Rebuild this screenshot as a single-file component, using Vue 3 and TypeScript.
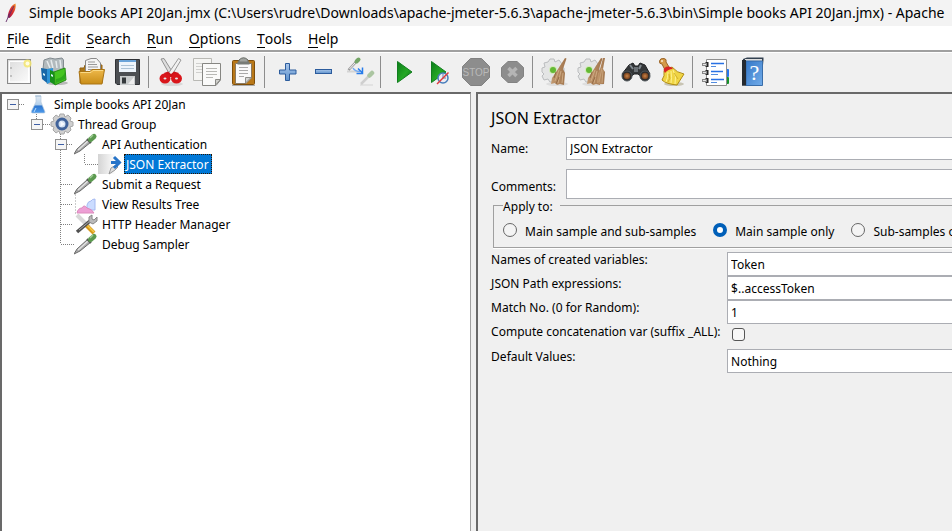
<script setup lang="ts">
import { ref } from 'vue'

type Guide = 'none' | 'line' | 'tee' | 'elbow' | 'root' | 'last' | 'open'
interface TreeNode {
  label: string
  icon: string
  guides: Guide[]
}

const menus = ['File', 'Edit', 'Search', 'Run', 'Options', 'Tools', 'Help']

const toolGroups: { id: string; label: string }[][] = [
  [
    { id: 'new', label: 'New' },
    { id: 'templates', label: 'Templates' },
    { id: 'open', label: 'Open' },
    { id: 'save', label: 'Save' },
  ],
  [
    { id: 'cut', label: 'Cut' },
    { id: 'copy', label: 'Copy' },
    { id: 'paste', label: 'Paste' },
  ],
  [
    { id: 'expand', label: 'Expand all' },
    { id: 'collapse', label: 'Collapse all' },
    { id: 'toggle', label: 'Toggle' },
  ],
  [
    { id: 'start', label: 'Start' },
    { id: 'startnow', label: 'Start no pauses' },
    { id: 'stop', label: 'Stop' },
    { id: 'shutdown', label: 'Shutdown' },
  ],
  [
    { id: 'clear', label: 'Clear' },
    { id: 'clearall', label: 'Clear all' },
  ],
  [
    { id: 'search', label: 'Search' },
    { id: 'reset', label: 'Reset search' },
  ],
  [
    { id: 'functions', label: 'Function helper' },
    { id: 'help', label: 'Help' },
  ],
]

const nodes: TreeNode[] = [
  { label: 'Simple books API 20Jan', icon: 'flask', guides: ['root'] },
  { label: 'Thread Group', icon: 'gear', guides: ['none', 'last'] },
  { label: 'API Authentication', icon: 'sampler', guides: ['none', 'none', 'open'] },
  { label: 'JSON Extractor', icon: 'extractor', guides: ['none', 'none', 'line', 'elbow'] },
  { label: 'Submit a Request', icon: 'sampler', guides: ['none', 'none', 'tee'] },
  { label: 'View Results Tree', icon: 'results', guides: ['none', 'none', 'tee'] },
  { label: 'HTTP Header Manager', icon: 'config', guides: ['none', 'none', 'tee'] },
  { label: 'Debug Sampler', icon: 'sampler', guides: ['none', 'none', 'elbow'] },
]
const isToggle = (g: Guide) => g === 'root' || g === 'last' || g === 'open'
const guidePaths: Record<Guide, string> = {
  none: '',
  line: 'M10.5 0V20',
  tee: 'M10.5 0V20M11 10.5H22',
  elbow: 'M10.5 0V10M11 10.5H24',
  root: 'M17 10.5H23',
  last: 'M10.5 0V5M17 10.5H24',
  open: 'M10.5 0V5M10.5 16V20M17 10.5H23',
}

const selected = ref('JSON Extractor')
const name = ref('JSON Extractor')
const comments = ref('')
const scope = ref('main')
const scopes = [
  { value: 'all', label: 'Main sample and sub-samples' },
  { value: 'main', label: 'Main sample only' },
  { value: 'sub', label: 'Sub-samples only' },
]
const variables = ref('Token')
const expressions = ref('$..accessToken')
const matchNo = ref('1')
const concatenate = ref(false)
const defaults = ref('Nothing')
</script>

<template>
  <div class="window">
    <svg class="defs" width="0" height="0" aria-hidden="true">
      <defs>
        <linearGradient id="gPaper" x1="0" y1="0" x2="1" y2="1"><stop offset="0" stop-color="#dcdcdc" /><stop offset="1" stop-color="#fdfdfd" /></linearGradient>
        <linearGradient id="gFolder" x1="0" y1="0" x2="0" y2="1"><stop offset="0" stop-color="#eeb94b" /><stop offset="1" stop-color="#c98d17" /></linearGradient>
        <linearGradient id="gGreen" x1="0" y1="0" x2="1" y2="1"><stop offset="0" stop-color="#0b7d1a" /><stop offset=".55" stop-color="#25a825" /><stop offset="1" stop-color="#0a6414" /></linearGradient>
        <linearGradient id="gBlue" x1="0" y1="0" x2="0" y2="1"><stop offset="0" stop-color="#a9c6ea" /><stop offset="1" stop-color="#5f93cd" /></linearGradient>
        <linearGradient id="gBook" x1="0" y1="0" x2="1" y2="1"><stop offset="0" stop-color="#3578c8" /><stop offset="1" stop-color="#72ace9" /></linearGradient>
        <linearGradient id="gFeather" x1="1" y1="0" x2="0" y2="1"><stop offset="0" stop-color="#f39a26" /><stop offset=".35" stop-color="#e0402b" /><stop offset=".7" stop-color="#c2203c" /><stop offset="1" stop-color="#5d2569" /></linearGradient>
        <linearGradient id="gBroom" x1="0" y1="0" x2="1" y2="0"><stop offset="0" stop-color="#c39a70" /><stop offset="1" stop-color="#a0744c" /></linearGradient>
        <linearGradient id="gFade" x1="0" y1="0" x2="1" y2="0"><stop offset="0" stop-color="#d4d4d4" /><stop offset="1" stop-color="#ffffff" /></linearGradient>
        <linearGradient id="gFlask" x1="0" y1="0" x2="0" y2="1"><stop offset="0" stop-color="#e3ebf3" /><stop offset=".5" stop-color="#b4d0eb" /><stop offset=".6" stop-color="#2f78d0" /><stop offset="1" stop-color="#4d9aec" /></linearGradient>
        <radialGradient id="gLens"><stop offset="0" stop-color="#c98448" /><stop offset="1" stop-color="#75401c" /></radialGradient>
      </defs>
    </svg>

    <header class="titlebar">
      <svg class="feather" width="12" height="20" viewBox="0 0 12 20" aria-hidden="true">
        <path d="M10.5 0.5C6.500 2 3.500 7 2.500 14.500L4.500 15C9 11 11.500 5 10.500 .5Z" fill="url(#gFeather)" />
        <path d="M9 3L3 14.500L1 19" fill="none" stroke="#632a68" stroke-width=".9" />
      </svg>
      <span class="caption">Simple books API 20Jan.jmx (C:\Users\rudre\Downloads\apache-jmeter-5.6.3\apache-jmeter-5.6.3\bin\Simple books API 20Jan.jmx) - Apache</span>
    </header>

    <nav class="menubar">
      <button v-for="m in menus" :key="m" type="button" class="menu"><span class="key">{{ m[0] }}</span>{{ m.slice(1) }}</button>
    </nav>

    <div class="toolbar" role="toolbar">
      <div v-for="(group, gi) in toolGroups" :key="gi" class="group">
        <button v-for="t in group" :key="t.id" type="button" class="tool" :aria-label="t.label">
          <svg width="32" height="32" viewBox="0 0 32 32" aria-hidden="true">
            <g v-if="t.id === 'new'">
              <rect x="5.500" y="3.500" width="23" height="24" fill="url(#gPaper)" stroke="#8a8a8a" />
              <path d="M7.500 26V5.500H26.500V26Z" fill="none" stroke="#fff" />
              <circle cx="9" cy="12" r=".8" fill="#888" /><circle cx="9" cy="20" r=".8" fill="#888" />
              <circle cx="25.500" cy="7.500" r="4" fill="#f5e66d" opacity=".85" /><circle cx="25.500" cy="7.500" r="2" fill="#fffde2" />
            </g>
            <g v-else-if="t.id === 'templates'">
              <ellipse cx="19" cy="27" rx="11" ry="2" fill="#b9b9b9" />
              <path d="M5 13L6 4L12 2L17 3L24 2L25.500 4V16L8 17Z" fill="#b2babd" stroke="#828b90" />
              <path d="M9 5L12 12M13 4L15 12M18 5L19 12M22 4L23 12" stroke="#e5eaec" stroke-width="1.500" />
              <path d="M3 12L9 13V27L4 23Z" fill="#1767a8" /><path d="M9 13L15 12V25L9 28Z" fill="#2e94d7" />
              <path d="M12 14L17 16V29L12 26Z" fill="#16901b" />
              <path d="M16 16L27 12L28 24L17 29Z" fill="#45c520" stroke="#278c18" />
              <path d="M18 27L27 23V16Q25 22 18 23Z" fill="#2eaa1b" /><path d="M5 17L7 18V20L5 19ZM13 18L15 19V21L13 20Z" fill="#d6f2f6" />
            </g>
            <g v-else-if="t.id === 'open'">
              <path d="M6 12H10L11 9H28V27H6Z" fill="#ad7819" stroke="#946313" />
              <path d="M11.500 15V4.500L17 2.500H22.500L26.500 7V18H11.500Z" fill="#f4f4f4" stroke="#8a8a8a" />
              <path d="M14 6H21M14 8.500H23M14 11H24M14 13.500H24" stroke="#999" />
              <path d="M5 15.500H16L18 13.500H30.500L28 28H7Z" fill="url(#gFolder)" stroke="#aa7414" />
              <path d="M6.500 16.500H17L19 14.500H29" fill="none" stroke="#f9d986" />
            </g>
            <g v-else-if="t.id === 'save'">
              <path d="M5.500 3.500H29.500V28.500H7L5.500 27Z" fill="#4c4f53" stroke="#303236" />
              <rect x="9" y="4" width="17" height="12" fill="#edf4fb" /><path d="M9 4H26V6H9Z" fill="#6ba4d9" />
              <path d="M11 9.500H24M11 12.500H24" stroke="#acc2d5" />
              <rect x="10" y="20" width="15" height="9" fill="#c9cccd" /><rect x="12" y="21.500" width="4" height="6" fill="#34383b" /><path d="M18 28L24 21V28Z" fill="#eee" />
            </g>
            <g v-else-if="t.id === 'cut'">
              <ellipse cx="18" cy="28" rx="11" ry="2" fill="#d8d8d8" />
              <path d="M7 3L10 2.500L19 17L16 19Z" fill="#dedede" stroke="#929292" /><path d="M24.500 2.500L27 4L18 19L14 18Z" fill="#f2f2f2" stroke="#999" />
              <path d="M10 17L14 15.500L17 18L20 15.500L25 17L22 21H12Z" fill="#cd151a" />
              <ellipse cx="11" cy="22.500" rx="3.500" ry="3" fill="#e9e9e9" stroke="#d9161b" stroke-width="4" /><ellipse cx="22.500" cy="22.500" rx="3.500" ry="3" fill="#e9e9e9" stroke="#d9161b" stroke-width="4" />
            </g>
            <g v-else-if="t.id === 'copy'">
              <path d="M3.500 2.500H21.500V24.500H3.500Z" fill="#f5f5f3" stroke="#b9b9b5" /><path d="M6 7.500H18M6 10.500H14M6 13.500H14M6 16.500H14" stroke="#d0d0ce" />
              <path d="M12.500 7.500H30.500V24L26 29.500H12.500Z" fill="#fafaf9" stroke="#868682" /><path d="M16 12.500H27M16 15.500H27M16 18.500H27M16 21.500H23" stroke="#b8b8b4" /><path d="M25.500 29V23.500H30.500Z" fill="#cfcfcb" stroke="#8a8a86" />
            </g>
            <g v-else-if="t.id === 'paste'">
              <rect x="6.500" y="4.500" width="22" height="24" rx="1" fill="#b97818" stroke="#7e4e0a" />
              <path d="M9.500 7.500H25.500V22L20 27.500H9.500Z" fill="#fafafa" stroke="#8b7a61" />
              <path d="M13 6.500V4Q17.500-.5 22 4V6.500Z" fill="#a0a39f" stroke="#666a65" /><rect x="11.500" y="5.500" width="12" height="3" fill="#777b76" />
              <path d="M13 11.500H22M13 14.500H22M13 17.500H22M13 20.500H18" stroke="#aaa" /><path d="M19.500 27V21.500H25Z" fill="#d5d5d3" stroke="#8e8e8a" />
              <path d="M6 29.500H29" stroke="#aaa" />
            </g>
            <path v-else-if="t.id === 'expand'" d="M15.500 7.500H19.500V14H26V18H19.500V24.500H15.500V18H9.500V14H15.500Z" fill="url(#gBlue)" stroke="#2c5c9d" />
            <rect v-else-if="t.id === 'collapse'" x="9.500" y="13.500" width="16" height="4" fill="url(#gBlue)" stroke="#2c5c9d" />
            <g v-else-if="t.id === 'toggle'">
              <path d="M5 15.500H18" stroke="#d4d4d4" stroke-width="2" /><path d="M18 29H31" stroke="#e2e2e2" stroke-width="2" />
              <path d="M6.500 14L14 6" stroke="#9a9a9a" stroke-width="2.500" /><path d="M7.500 13L14 6" stroke="#f6f6f6" /><path d="M14.500 5.500L16.500 3.500" stroke="#74a566" stroke-width="4" stroke-linecap="round" />
              <path d="M11 12Q13 15.500 18 15.500" fill="none" stroke="#73aaf3" stroke-width="1.500" /><path d="M16 12.500L20 16.500M20.500 11.500V17.500H14.500" fill="none" stroke="#277ceb" stroke-width="1.500" />
              <g opacity=".55"><path d="M19 28L27 20" stroke="#b5b5b5" stroke-width="2.500" /><path d="M27.500 19.500L30 17" stroke="#73a362" stroke-width="4.500" stroke-linecap="round" /></g>
            </g>
            <path v-else-if="t.id === 'start'" d="M11.500 5.500L26 16L11.500 26.500Z" fill="url(#gGreen)" stroke="#127e20" />
            <g v-else-if="t.id === 'startnow'">
              <path d="M9.500 5.500L24 16L9.500 26.500Z" fill="url(#gGreen)" stroke="#127e20" />
              <circle cx="21" cy="22" r="5" fill="#ececf2" stroke="#487dbb" stroke-width="1.500" /><path d="M21 22V18M21 22H24" stroke="#5c83b2" /><path d="M15 28L26.500 16.500" stroke="#e13a3d" stroke-width="1.500" />
            </g>
            <g v-else-if="t.id === 'stop'">
              <path d="M12.500 2.500H23.500L31.500 10.500V21.500L23.500 29.500H12.500L4.500 21.500V10.500Z" fill="#8d8d8d" stroke="#818181" />
              <text x="18" y="20" text-anchor="middle" class="stop-text">STOP</text>
            </g>
            <g v-else-if="t.id === 'shutdown'">
              <path d="M14 5.500H23L29.500 11.500V20.500L23 26.500H14L7.500 20.500V11.500Z" fill="#8d8d8d" stroke="#838383" />
              <path d="M14.500 12L22.500 20M22.500 12L14.500 20" stroke="#b5b5b5" stroke-width="3.500" />
            </g>
            <g v-else-if="t.id === 'clear' || t.id === 'clearall'">
              <ellipse cx="19" cy="28" rx="11" ry="2" fill="#dedede" />
              <path d="M12 3H16L17 6L21 4L24 8L22 11L26 12V17L22 19L23 22L19 25L16 23L15 26H12L10 23L6 24L4 20L6 18L4 16V12L7 11L6 7L10 6Z" fill="#e4e5e5" stroke="#bbbdbf" />
              <circle cx="15" cy="14" r="4" fill="#d2eab9" /><circle cx="15" cy="14" r="3" fill="#63b933" />
              <path d="M28.500 2.500L25 13L27 17L26 29L22 28L19 29L17 27L13 28L14 22L20 13L27 2Z" fill="url(#gBroom)" />
              <path d="M21 14L17 25M23 15L20 27M25 17L24 27" stroke="#cfab83" /><path d="M18 16L16 22M21 21L18 28" stroke="#946b46" />
              <g v-if="t.id === 'clearall'"><path d="M31 2L29 13L31 16L30 28L25 28L23 26L24 18L26 13L29 2Z" fill="url(#gBroom)" /><path d="M28 12L25 26M29 14L28 27" stroke="#c9a37a" /></g>
            </g>
            <g v-else-if="t.id === 'search'">
              <path d="M11 9L15 7L17 10H20L22 7L27 9L32 18L27 24L20 18H16L9 24L4 18Z" fill="#333638" stroke="#202224" />
              <path d="M12 9L15 13M23 9L21 13" stroke="#81898f" stroke-width="2" /><rect x="16" y="11" width="4" height="5" fill="#6b7176" />
              <circle cx="9" cy="20" r="5" fill="#292b2c" stroke="#4f565a" /><circle cx="9" cy="20" r="3.300" fill="url(#gLens)" /><circle cx="27" cy="20" r="5" fill="#292b2c" stroke="#4f565a" /><circle cx="27" cy="20" r="3.300" fill="url(#gLens)" />
            </g>
            <g v-else-if="t.id === 'reset'">
              <ellipse cx="20" cy="28" rx="10" ry="2" fill="#c8c4b3" />
              <path d="M5.500 5Q6 2 10 2.500Q13 3 12 6L15 11L11 14L8 8Q5 8 5.500 5Z" fill="#d49a49" stroke="#9b6427" /><circle cx="8" cy="5" r="1" fill="#f8ead2" />
              <path d="M10 15L18 11Q23 17 30 18L23 29Q12 28 8 24Q11 20 10 15Z" fill="#f0d544" stroke="#b18c12" />
              <path d="M14 16Q14 22 12 26M17 15Q18 22 17 27M19 14Q23 20 21 28" fill="none" stroke="#fff391" /><path d="M15 18Q17 23 14 26M20 17L24 23" fill="none" stroke="#d3b02d" />
              <path d="M9.500 14Q11 9 17 11L19 13Q14 13 11 17Z" fill="#d72524" />
            </g>
            <g v-else-if="t.id === 'functions'">
              <rect x="26" y="13" width="5" height="8" rx="1" fill="#2676ee" /><rect x="26" y="21" width="5" height="7" rx="1" fill="#17922b" />
              <path d="M8.500 3.500H28.500V29.500H8.500Z" fill="#fff" stroke="#8e8e8e" />
              <path d="M9 6V11M9 14V19M9 22V27" stroke="#272727" stroke-width="3" />
              <g fill="#e6e6e6" stroke="#888"><rect x="4.500" y="7.500" width="4" height="2" /><rect x="4.500" y="15.500" width="4" height="2" /><rect x="4.500" y="23.500" width="4" height="2" /></g>
              <path d="M13 7.500H26M13 15.500H25M13 23.500H26" stroke="#2871e4" stroke-width="1.500" /><path d="M13 10.500H18M13 18.500H20M13 26.500H19" stroke="#528ce0" />
            </g>
            <g v-else-if="t.id === 'help'">
              <path d="M9 3L13 1.500H29.500V4L27 29.500H8Z" fill="#334150" /><path d="M11 3H28V5H11Z" fill="#dedede" />
              <path d="M12 5H28.500V29.500H12Z" fill="url(#gBook)" stroke="#396da9" /><path d="M8 4H12V29.500H8Z" fill="#252a30" />
              <text x="20.500" y="24" text-anchor="middle" class="help-text">?</text>
            </g>
          </svg>
        </button>
      </div>
    </div>

    <main class="split">
      <section class="tree-pane">
        <ul class="tree" role="tree">
          <li v-for="n in nodes" :key="n.label" class="node" role="treeitem" :aria-selected="selected === n.label">
            <template v-for="(g, i) in n.guides" :key="i">
              <button v-if="isToggle(g)" type="button" class="guide" aria-label="Collapse">
                <svg width="24" height="20" viewBox="0 0 24 20" aria-hidden="true">
                  <path :d="guidePaths[g]" class="dots" />
                  <rect x="5.500" y="5.500" width="11" height="10" fill="#f5f5f5" stroke="#919191" /><path d="M8 10.500H14" stroke="#3e5fa5" />
                </svg>
              </button>
              <svg v-else class="guide" width="24" height="20" viewBox="0 0 24 20" aria-hidden="true"><path :d="guidePaths[g]" class="dots" /></svg>
            </template>
            <svg class="node-icon" width="24" height="24" viewBox="0 0 24 24" aria-hidden="true">
              <g v-if="n.icon === 'flask'"><path d="M10 4H15V10L19 20Q19 21 18 21H6Q5 21 5.500 19L10 10Z" fill="url(#gFlask)" stroke="#b6c9dc" stroke-width=".7" /><path d="M9 4H15" stroke="#9fbbd4" /><path d="M10 16L8 20" stroke="#b9defd" /></g>
              <g v-else-if="n.icon === 'gear'">
                <path d="M10 2H14L15 5L18 3L21 6L20 9L23 10V14L20 15L21 18L18 21L15 19L14 22H10L9 19L6 21L3 18L4 15L1 14V10L4 9L3 6L6 3L9 5Z" fill="#cfcfcf" stroke="#a8a8a8" />
                <circle cx="12" cy="12" r="5" fill="#d1e0f2" stroke="#41639a" stroke-width="3" /><path d="M10.500 9L15 12L10.500 15Z" fill="#f7faff" />
              </g>
              <g v-else-if="n.icon === 'sampler'">
                <path d="M0 22L3 17L14 7L17 10L6 19Z" fill="#aaa" stroke="#6b6b6b" /><path d="M4 18L14 9" stroke="#e2e2e2" stroke-width="1.500" />
                <path d="M13 7L17 11" stroke="#555" stroke-width="2" /><path d="M16.500 7.500L20 4.500" stroke="#5c9a50" stroke-width="5" stroke-linecap="round" /><path d="M16 6L19 3" stroke="#9ecb93" stroke-width="1.500" />
              </g>
              <g v-else-if="n.icon === 'extractor'"><path d="M0 2H18V22H0Z" fill="url(#gFade)" /><path d="M11 22L13 16L18 13L20 15L17 18Z" fill="#ddd" stroke="#989898" /><path d="M13 10.500H21M16 5L21.500 10.500L16 16" fill="none" stroke="#2774c8" stroke-width="3" /></g>
              <g v-else-if="n.icon === 'results'"><path d="M1.500 2V22" fill="none" stroke="#ccc" stroke-dasharray="2 1" /><path d="M13 18V13Q14 9 17 9Q18 7 21 7V18Z" fill="#cbdcff" stroke="#a5baf1" /><path d="M3 21Q4 16 8 16Q10 12 13 16Q18 17 20 21Z" fill="#ed9fd5" stroke="#dc8abc" /></g>
              <g v-else><path d="M3 3L15 15" stroke="#d8d8d8" stroke-width="4" /><path d="M12 13L20 21" stroke="#d79a1c" stroke-width="4" /><path d="M13 13L20 20" stroke="#f5ca4a" stroke-width="1.500" /><path d="M3 20L16 9" stroke="#505050" stroke-width="3.500" /><path d="M5 18L16 9" stroke="#aaa" /><path d="M15 10V5L18 3V7L20 8L23 5V9L19 12Z" fill="#bababa" stroke="#888" /></g>
            </svg>
            <button type="button" class="node-label" :class="{ selected: selected === n.label }" @click="selected = n.label">{{ n.label }}</button>
          </li>
        </ul>
      </section>

      <form class="editor" @submit.prevent>
        <h1>JSON Extractor</h1>
        <div class="head-row">
          <label for="f-name">Name:</label>
          <input id="f-name" v-model="name" type="text" class="field" />
        </div>
        <div class="head-row comments">
          <label for="f-comments">Comments:</label>
          <input id="f-comments" v-model="comments" type="text" class="field" />
        </div>
        <fieldset>
          <legend>Apply to:</legend>
          <div class="radios">
            <label v-for="s in scopes" :key="s.value"><input v-model="scope" type="radio" name="scope" :value="s.value" />{{ s.label }}</label>
          </div>
        </fieldset>
        <div class="grid">
          <label for="f-vars">Names of created variables:</label>
          <input id="f-vars" v-model="variables" type="text" class="field" />
          <label for="f-expr">JSON Path expressions:</label>
          <input id="f-expr" v-model="expressions" type="text" class="field" />
          <label for="f-match">Match No. (0 for Random):</label>
          <input id="f-match" v-model="matchNo" type="text" class="field" />
          <label for="f-concat">Compute concatenation var (suffix _ALL):</label>
          <span class="check"><input id="f-concat" v-model="concatenate" type="checkbox" /></span>
          <label for="f-def">Default Values:</label>
          <input id="f-def" v-model="defaults" type="text" class="field" />
        </div>
      </form>
    </main>
  </div>
</template>

<style>
body {
  background: #f0f0f0;
  overflow: hidden;
}
</style>

<style scoped>
.window {
  display: flex;
  flex-direction: column;
  height: 100vh;
  overflow: hidden;
  background: #f0f0f0;
  color: #000;
  font-family: 'Noto Sans', sans-serif;
  font-size: 12px;
  line-height: 16px;
}
.window * {
  box-sizing: border-box;
}
.defs {
  position: absolute;
}
button {
  padding: 0;
  border: 0;
  background: none;
  color: inherit;
  font: inherit;
}
.titlebar {
  display: flex;
  flex: none;
  align-items: center;
  gap: 12px;
  height: 26px;
  padding-left: 5px;
  background: #f3f3f3;
  font-size: 14px;
  line-height: 26px;
  white-space: nowrap;
}
.feather {
  flex: none;
}
.menubar {
  display: flex;
  flex: none;
  gap: 16px;
  height: 24px;
  padding-left: 7px;
  background: #fff;
  font-size: 14px;
  line-height: 26px;
}
.key {
  display: inline-block;
  border-bottom: 1px solid #000;
  line-height: 16px;
}
.toolbar {
  display: flex;
  flex: none;
  height: 42px;
  border-top: 2px solid #a0a0a0;
  box-shadow: inset 0 1px #fff;
}
.group {
  display: flex;
  align-items: center;
}
.group + .group::before {
  content: '';
  width: 1px;
  height: 32px;
  margin: 0 3px 0 4px;
  background: #8d8d8d;
}
.tool {
  display: flex;
  justify-content: center;
  width: 36px;
}
.tool svg {
  overflow: visible;
}
.stop-text {
  fill: #b9b9b9;
  font: 10px 'Liberation Sans', sans-serif;
}
.help-text {
  fill: #fff;
  font: 22px 'Liberation Serif', serif;
}
.split {
  display: grid;
  flex: 1;
  grid-template-columns: minmax(0, 99fr) minmax(0, 100fr);
  gap: 5px;
  min-height: 0;
}
.tree-pane {
  border: 2px solid #696969;
  border-right: 1px solid #a0a0a0;
  border-bottom: 0;
  background: #fff;
  overflow: hidden;
}
.tree {
  margin: 0;
  padding: 0;
  list-style: none;
}
.node {
  display: flex;
  align-items: center;
  height: 20px;
}
.guide {
  display: block;
  flex: none;
  width: 24px;
  height: 20px;
}
.guide svg {
  display: block;
}
.dots {
  fill: none;
  stroke: #808080;
  stroke-dasharray: 1 1;
}
.node-icon {
  flex: none;
}
.node-label {
  height: 20px;
  margin-left: 2px;
  padding: 0 3px 0 2px;
  line-height: 22px;
  white-space: nowrap;
}
.selected {
  background: #0078d7;
  color: #fff;
  outline: 1px dotted #2b1500;
  outline-offset: -1px;
}
.editor {
  padding-left: 13px;
  border-top: 2px solid #696969;
  border-left: 2px solid #696969;
  overflow: hidden;
}
h1 {
  margin: 14px 0 9px;
  font-size: 16px;
  font-weight: 400;
  line-height: 20px;
}
.head-row {
  display: grid;
  grid-template-columns: 75px 1fr;
  align-items: center;
  height: 23px;
}
.head-row.comments {
  height: 30px;
  margin-top: 9px;
}
.comments label {
  padding-top: 6px;
}
.field {
  width: 100%;
  height: 100%;
  min-width: 0;
  padding: 0 3px;
  border: 1px solid #abadb3;
  border-right: 0;
  border-radius: 0;
  background: #fff;
  color: #000;
  font: inherit;
  outline: 0;
}
fieldset {
  min-width: 0;
  margin: -3px 0 4px 2px;
  padding: 0 0 0 9px;
  border: 1px solid #a0a0a0;
  border-right: 0;
  box-shadow: 0 1px #fff;
  white-space: nowrap;
}
legend {
  padding: 4px 7px 0 0;
  line-height: 14px;
}
.radios {
  display: flex;
  gap: 17px;
  height: 33px;
  padding-top: 9px;
}
.radios label {
  display: flex;
  flex: none;
  gap: 8px;
  line-height: 18px;
}
.radios input {
  flex: none;
  width: 14px;
  height: 14px;
  margin: 0;
  border: 1px solid #666;
  border-radius: 50%;
  background: #f4f4f4;
  appearance: none;
}
.radios input:checked {
  border: 4px solid #005fb8;
  background: #fff;
}
.grid {
  display: grid;
  grid-template-columns: 236px 1fr;
  grid-template-rows: 24px 24px 24px 25px 24px;
  white-space: nowrap;
}
.check {
  padding: 4px 5px;
}
.check input {
  display: block;
  width: 13px;
  height: 13px;
  margin: 0;
  border: 1px solid #555;
  border-radius: 3px;
  background: #f7f7f7;
  appearance: none;
}
.check input:checked {
  background: #005fb8;
}
</style>
